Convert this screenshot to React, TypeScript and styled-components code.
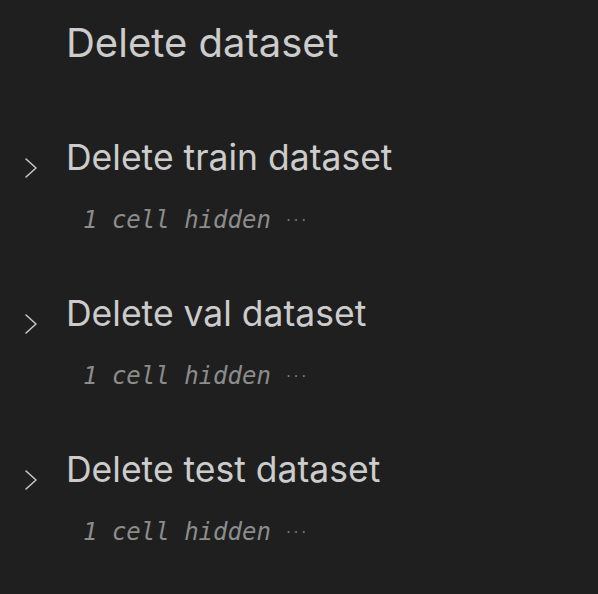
import React from "react";
import styled, { createGlobalStyle } from "styled-components";

const Global = createGlobalStyle`
  html, body { margin: 0; padding: 0; background: #1f1f1f; }
  body { width: 598px; height: 594px; overflow: hidden; }
`;

const Page = styled.div`
  width: 598px;
  height: 594px;
  background: #1f1f1f;
  display: flex;
  flex-direction: column;
  padding-top: 16px;
  box-sizing: border-box;
`;

const Title = styled.h1`
  margin: 0 0 0 66px;
  font-family: Inter, "Noto Sans", sans-serif;
  font-weight: 400;
  font-size: 40px;
  line-height: 54px;
  color: #cccccc;
`;

const Section = styled.section<{ $first?: boolean }>`
  margin-top: ${(p) => (p.$first ? "64px" : "50px")};
  display: flex;
  flex-direction: column;
`;

const HeadRow = styled.div`
  display: flex;
  align-items: center;
  height: 48px;
`;

const Chevron = styled.div`
  width: 66px;
  display: flex;
  justify-content: center;
  padding-top: 20px;
  padding-right: 4px;
  box-sizing: border-box;
`;

const Heading = styled.h2`
  margin: 0;
  font-family: Inter, "Noto Sans", sans-serif;
  font-weight: 400;
  font-size: 35.5px;
  line-height: 48px;
  color: #cccccc;
`;

const Hidden = styled.div`
  margin: 18px 0 0 83px;
  font-family: "DejaVu Sans Mono", monospace;
  font-style: italic;
  font-size: 24px;
  line-height: 40px;
  color: #8c8c8c;
  display: flex;
  align-items: center;
  gap: 14px;
`;

const Dots = styled.span`
  font-style: normal;
  font-size: 12.5px;
  color: #808080;
`;

const ChevronIcon = () => (
  <svg width="16" height="22" viewBox="0 0 16 22" fill="none">
    <path d="M3 2 L13 11 L3 20" stroke="#c5c5c5" strokeWidth="1.6" strokeLinecap="round" strokeLinejoin="round" />
  </svg>
);

const sections = ["Delete train dataset", "Delete val dataset", "Delete test dataset"];

export default function App() {
  return (
    <Page>
      <Global />
      <Title>Delete dataset</Title>
      {sections.map((s, i) => (
        <Section key={s} $first={i === 0}>
          <HeadRow>
            <Chevron>
              <ChevronIcon />
            </Chevron>
            <Heading>{s}</Heading>
          </HeadRow>
          <Hidden>
            1 cell hidden <Dots>···</Dots>
          </Hidden>
        </Section>
      ))}
    </Page>
  );
}
